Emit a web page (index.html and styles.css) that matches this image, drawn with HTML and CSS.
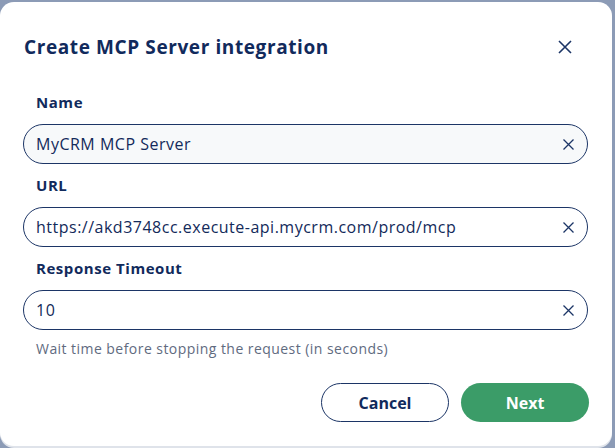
FILE: index.html
```html
<!DOCTYPE html>
<html lang="en">
<head>
<meta charset="utf-8">
<title>Create MCP Server integration</title>
<link rel="stylesheet" href="styles.css">
</head>
<body>
<div class="dialog" role="dialog" aria-labelledby="dlg-title">
  <header class="dialog-head">
    <h1 id="dlg-title" class="dialog-title">Create MCP Server integration</h1>
    <button class="icon-btn close-btn" aria-label="Close">
      <svg width="14" height="14" viewBox="0 0 14 14"><path d="M1 1L13 13M13 1L1 13" stroke="currentColor" stroke-width="1.6" fill="none"/></svg>
    </button>
  </header>

  <form class="dialog-body">
    <label class="field">
      <span class="field-label">Name</span>
      <span class="input-wrap filled">
        <input class="input" type="text" value="MyCRM MCP Server">
        <span class="clear" aria-hidden="true"><svg width="11" height="11" viewBox="0 0 11 11"><path d="M0.5 0.5L10.5 10.5M10.5 0.5L0.5 10.5" stroke="currentColor" stroke-width="1.3" fill="none"/></svg></span>
      </span>
    </label>

    <label class="field">
      <span class="field-label">URL</span>
      <span class="input-wrap">
        <input class="input" type="text" value="https://akd3748cc.execute-api.mycrm.com/prod/mcp">
        <span class="clear" aria-hidden="true"><svg width="11" height="11" viewBox="0 0 11 11"><path d="M0.5 0.5L10.5 10.5M10.5 0.5L0.5 10.5" stroke="currentColor" stroke-width="1.3" fill="none"/></svg></span>
      </span>
    </label>

    <label class="field">
      <span class="field-label">Response Timeout</span>
      <span class="input-wrap">
        <input class="input" type="text" value="10">
        <span class="clear" aria-hidden="true"><svg width="11" height="11" viewBox="0 0 11 11"><path d="M0.5 0.5L10.5 10.5M10.5 0.5L0.5 10.5" stroke="currentColor" stroke-width="1.3" fill="none"/></svg></span>
      </span>
      <span class="field-help">Wait time before stopping the request (in seconds)</span>
    </label>
  </form>

  <footer class="dialog-foot">
    <button class="btn btn-outline">Cancel</button>
    <button class="btn btn-primary">Next</button>
  </footer>
</div>
</body>
</html>
```

FILE: styles.css
```css
* { box-sizing: border-box; }

html, body {
  margin: 0;
  height: 100%;
}

body {
  background: #8c9bb6;
  font-family: "Open Sans", "Noto Sans", sans-serif;
  color: #132a5a;
  overflow: hidden;
}

.dialog {
  width: 612px;
  height: 444px;
  margin-top: 2px;
  background: #fff;
  border-radius: 14px;
  box-shadow: 0 2px 0 #dfe3ea;
  display: flex;
  flex-direction: column;
  padding: 0 24px 0 23px;
}

.dialog-head {
  display: flex;
  align-items: center;
  justify-content: space-between;
  height: 90px;
}

.dialog-title {
  margin: 0;
  font-size: 19px;
  font-weight: 700;
  letter-spacing: 0.6px;
  color: #112a5c;
  padding-left: 1px;
}

.icon-btn {
  border: 0;
  background: none;
  padding: 0;
  color: #1c3566;
  display: flex;
  cursor: pointer;
}

.close-btn { margin-right: 16px; }

.dialog-body {
  display: flex;
  flex-direction: column;
  gap: 11px;
  margin: 0;
}

.field {
  display: flex;
  flex-direction: column;
}

.field-label {
  font-size: 15px;
  font-weight: 700;
  letter-spacing: 0.55px;
  color: #112a5c;
  padding-left: 13px;
  line-height: 20px;
  margin-bottom: 12px;
}

.input-wrap {
  display: flex;
  align-items: center;
  height: 40px;
  border: 1px solid #1c3566;
  border-radius: 20px;
  background: #fff;
  padding: 0 13px 0 12px;
}

.input-wrap.filled { background: #f7f9fa; }

.input {
  flex: 1;
  min-width: 0;
  border: 0;
  outline: none;
  background: transparent;
  font: inherit;
  font-size: 16px;
  letter-spacing: 0.5px;
  color: #132a5a;
  padding: 0;
}

.clear {
  display: flex;
  color: #1c3566;
}

.field-help {
  margin-top: 10px;
  padding-left: 13px;
  font-size: 14px;
  letter-spacing: 0.45px;
  color: #5f6b7f;
  line-height: 18px;
}

.dialog-foot {
  display: flex;
  justify-content: flex-end;
  gap: 12px;
  margin-top: 25px;
  margin-right: -1px;
}

.btn {
  width: 128px;
  height: 39px;
  border-radius: 20px;
  font: inherit;
  font-size: 16px;
  font-weight: 700;
  cursor: pointer;
}

.btn-outline {
  background: #fff;
  border: 1px solid #1c3566;
  color: #112a5c;
}

.btn-primary {
  background: #3b9c68;
  border: 0;
  color: #fff;
}
```
